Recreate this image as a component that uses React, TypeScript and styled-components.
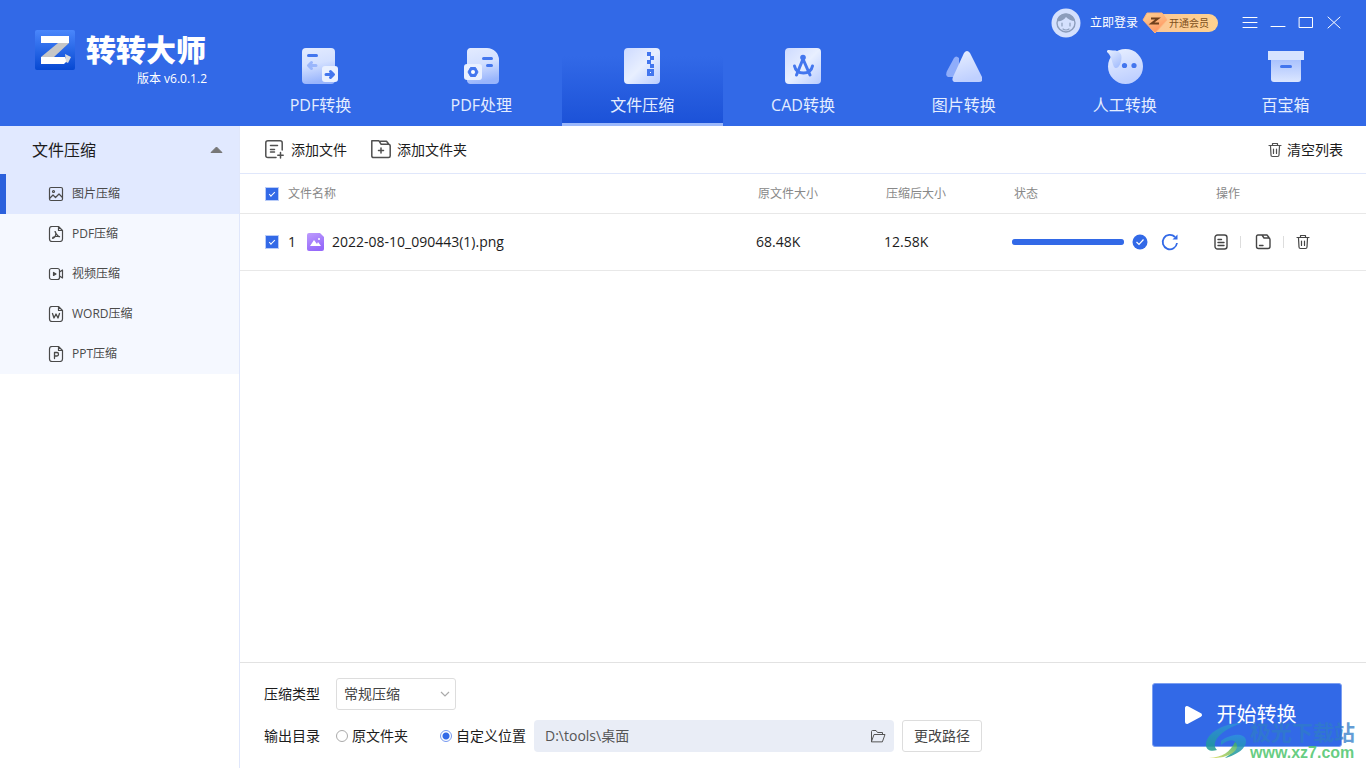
import React, { useState } from 'react';
import styled, { createGlobalStyle, css } from 'styled-components';

const blue = '#3269e7';
const sans = '"Open Sans", "Noto Sans CJK SC", "Noto Sans", sans-serif';

const GlobalStyle = createGlobalStyle`
  *, *::before, *::after { box-sizing: border-box; }
  body { margin: 0; background: #fff; color: #1c1c1c; font: 14px/20px ${sans}; }
  button, input, select { font: inherit; color: inherit; margin: 0; }
  button { padding: 0; border: 0; background: none; cursor: pointer; }
  svg { display: block; flex: none; }
`;

const Page = styled.div`
  display: flex;
  flex-direction: column;
  min-height: 100vh;
`;

const Header = styled.header`
  display: grid;
  grid-template-columns: 240px 1fr;
  background: ${blue};
  color: #fff;
`;

const Brand = styled.div`
  display: grid;
  grid-template-columns: 40px 121px;
  column-gap: 11px;
  align-content: start;
  padding: 30px 0 0 35px;
`;

const BrandName = styled.h1`
  margin: 0;
  font-size: 30px;
  line-height: 40px;
  font-weight: 900;
  white-space: nowrap;
`;

const Version = styled.span`
  grid-column: 2;
  font-size: 12px;
  line-height: 18px;
  text-align: right;
`;

const HeaderMain = styled.div`
  display: flex;
  flex-direction: column;
`;

const TitleBar = styled.div`
  display: flex;
  align-items: center;
  justify-content: flex-end;
  height: 46px;
  padding-right: 24px;
`;

const LoginButton = styled.button`
  display: flex;
  align-items: center;
  gap: 9px;
  font-size: 12px;
`;

const VipButton = styled.button`
  display: flex;
  align-items: center;
  height: 18px;
  margin-left: 4px;
  padding-right: 9px;
  border-radius: 0 9px 9px 0;
  background: linear-gradient(90deg, #fff0 12px, #fbc795 12px, #ffd28f);
  color: #80501c;
  font-size: 10px;
  line-height: 18px;
`;

const WindowControls = styled.div`
  display: flex;
  gap: 12px;
  margin-left: 24px;
`;

const WindowButton = styled.button`
  width: 16px;
  height: 16px;
`;

const Tabs = styled.nav`
  display: grid;
  grid-template-columns: repeat(7, 1fr);
  flex: 1;
`;

const Tab = styled.button<{ $active?: boolean }>`
  display: flex;
  flex-direction: column;
  align-items: center;
  gap: 8px;
  height: 80px;
  padding-top: 2px;
  border-bottom: 3px solid transparent;
  color: #e4edff;
  font-size: 16px;
  line-height: 26px;
  ${(p) => p.$active && css`
    border-color: #9bb8fb;
    background: linear-gradient(#3269e7 10px, #1c52d8);
    background-clip: padding-box;
  `}
`;

const Body = styled.div`
  display: flex;
  flex: 1;
`;

const Sidebar = styled.aside`
  flex: none;
  width: 240px;
  border-right: 1px solid #e0e7fb;
`;

const GroupButton = styled.button`
  display: flex;
  align-items: center;
  justify-content: space-between;
  width: 100%;
  height: 48px;
  padding: 0 16px 0 32px;
  background: #e1e9ff;
  font-size: 16px;
`;

const SideItem = styled.button<{ $active?: boolean }>`
  display: flex;
  align-items: center;
  gap: 8px;
  width: 100%;
  height: 40px;
  padding-left: 42px;
  border-left: 6px solid ${(p) => (p.$active ? '#2b60dc' : '#f5f8ff')};
  background: ${(p) => (p.$active ? '#e1e9ff' : '#f5f8ff')};
  color: #4a4a4a;
  font-size: 12px;
`;

const Main = styled.main`
  display: flex;
  flex-direction: column;
  flex: 1;
  min-width: 0;
`;

const Toolbar = styled.div`
  display: flex;
  align-items: center;
  gap: 24px;
  height: 48px;
  padding: 0 23px 0 25px;
  border-bottom: 1px solid #e0e7fb;
`;

const ToolButton = styled.button<{ $end?: boolean }>`
  display: flex;
  align-items: center;
  gap: ${(p) => (p.$end ? 5 : 6)}px;
  margin-left: ${(p) => (p.$end ? 'auto' : 0)};
  > svg { color: #505050; }
`;

const FileArea = styled.div`
  flex: 1;
`;

const FileTable = styled.table`
  width: 100%;
  table-layout: fixed;
  border-collapse: separate;
  border-spacing: 0;
  text-align: left;
`;

const Col = styled.col<{ $width?: number }>`
  width: ${(p) => (p.$width ? `${p.$width}px` : 'auto')};
`;

const HeadCell = styled.th`
  height: 40px;
  padding: 0 0 0 2px;
  border-bottom: 1px solid #e8e8e8;
  color: #888;
  font-size: 12px;
  font-weight: 400;
  &:nth-child(2) { padding-left: 0; }
  &:first-child { padding-left: 26px; }
`;

const Cell = styled.td`
  height: 57px;
  padding: 0;
  border-bottom: 1px solid #e8e8e8;
  &:first-child { padding-left: 26px; }
`;

const CellRow = styled.div<{ $gap: number }>`
  display: flex;
  align-items: center;
  gap: ${(p) => p.$gap}px;
`;

const Checkbox = styled.input.attrs({ type: 'checkbox' })`
  display: block;
  appearance: none;
  width: 12px;
  height: 12px;
  outline: 1px solid #b9ccf8;
  background: #fff;
  &:checked {
    background: ${blue};
  }
  &:checked::after {
    content: '';
    display: block;
    width: 6px;
    height: 3px;
    margin: 4px 0 0 3px;
    border: solid #fff;
    border-width: 0 0 1px 1px;
    transform: rotate(-45deg);
  }
`;

const Progress = styled.div`
  width: 112px;
  height: 6px;
  margin-right: 8px;
  border-radius: 3px;
  background: #a9c0f7;
`;

const ProgressFill = styled.div`
  height: 100%;
  border-radius: 3px;
  background: ${blue};
`;

const IconButton = styled.button`
  color: #454545;
`;

const Divider = styled.span`
  width: 1px;
  height: 12px;
  background: #ddd;
`;

const Footer = styled.footer`
  display: flex;
  align-items: flex-start;
  justify-content: space-between;
  padding: 15px 24px 16px;
  border-top: 1px solid #e2e2e2;
`;

const Settings = styled.form`
  display: grid;
  gap: 10px;
`;

const SettingRow = styled.div`
  display: flex;
  align-items: center;
  height: 32px;
`;

const SettingLabel = styled.label`
  width: 72px;
`;

const SelectWrap = styled.span`
  display: grid;
  align-items: center;
  width: 120px;
  > * { grid-area: 1 / 1; }
  > svg { justify-self: end; margin-right: 6px; pointer-events: none; }
`;

const Select = styled.select`
  appearance: none;
  width: 100%;
  height: 32px;
  padding: 0 7px;
  border: 1px solid #ddd;
  border-radius: 3px;
  background: #fff;
  color: #444;
`;

const RadioLabel = styled.label`
  display: flex;
  align-items: center;
  gap: 4px;
  & + & { margin-left: 32px; }
`;

const Radio = styled.input.attrs({ type: 'radio' })`
  appearance: none;
  width: 12px;
  height: 12px;
  border: 1px solid #aaa;
  border-radius: 50%;
  &:checked {
    border-color: #7699f0;
    background: radial-gradient(circle, ${blue} 3px, #fff 4px);
  }
`;

const PathBox = styled.div`
  display: flex;
  align-items: center;
  width: 360px;
  height: 32px;
  margin: 0 8px;
  padding: 0 8px 0 11px;
  border-radius: 4px;
  background: #e9edf6;
  color: #555;
`;

const PathInput = styled.input`
  flex: 1;
  min-width: 0;
  padding: 0;
  border: 0;
  outline: 0;
  background: transparent;
`;

const ChangeButton = styled.button`
  width: 80px;
  height: 32px;
  border: 1px solid #ddd;
  border-radius: 3px;
  color: #444;
`;

const StartButton = styled.button`
  display: flex;
  align-items: center;
  justify-content: center;
  gap: 14px;
  width: 190px;
  height: 64px;
  margin-top: 5px;
  padding-right: 14px;
  border: 1px solid #7c9ff1;
  border-radius: 3px;
  background: ${blue};
  color: #fff;
  font-size: 20px;
`;

const Watermark = styled.div`
  position: absolute;
  right: 11px;
  bottom: 6px;
  display: flex;
  align-items: flex-end;
  gap: 1px;
  pointer-events: none;
`;

const WatermarkText = styled.div`
  display: flex;
  flex-direction: column;
  color: rgba(48, 124, 200, 0.75);
  font: 700 21px/26px "Noto Sans CJK SC", sans-serif;
`;

const WatermarkUrl = styled.span`
  color: rgba(76, 196, 108, 0.85);
  font: 700 16px/18px "Liberation Sans", sans-serif;
`;

const Gradients = () => (
  <svg width="0" height="0" aria-hidden="true">
    <defs>
      <linearGradient id="down" x1="0" y1="0" x2="0.2" y2="1">
        <stop offset="0" stopColor="#e3ebff" />
        <stop offset="0.5" stopColor="#d3e0ff" />
        <stop offset="1" stopColor="#99b5fc" />
      </linearGradient>
      <linearGradient id="sheen" x1="0" y1="0" x2="1" y2="1">
        <stop offset="0" stopColor="#cddaff" />
        <stop offset="0.5" stopColor="#e8efff" />
        <stop offset="1" stopColor="#b9ccff" />
      </linearGradient>
      <linearGradient id="pale" x1="0" y1="0" x2="0.3" y2="1">
        <stop offset="0" stopColor="#e9f0ff" />
        <stop offset="1" stopColor="#bfd0ff" />
      </linearGradient>
      <linearGradient id="ear" x1="0" y1="0" x2="0.6" y2="1">
        <stop offset="0" stopColor="#e9f0ff" />
        <stop offset="1" stopColor="#a9c1fd" />
      </linearGradient>
      <linearGradient id="deep" x1="0" y1="0" x2="0" y2="1">
        <stop offset="0" stopColor="#a6bffd" />
        <stop offset="1" stopColor="#dbe6ff" />
      </linearGradient>
      <linearGradient id="logo" x1="0" y1="0" x2="0" y2="1">
        <stop offset="0" stopColor="#4a86fb" />
        <stop offset="1" stopColor="#0648d2" />
      </linearGradient>
      <linearGradient id="purple" x1="0" y1="0" x2="0.4" y2="1">
        <stop offset="0" stopColor="#bd9cfd" />
        <stop offset="1" stopColor="#9669fa" />
      </linearGradient>
      <linearGradient id="gem" x1="0" y1="0" x2="0.5" y2="1">
        <stop offset="0" stopColor="#ffd596" />
        <stop offset="1" stopColor="#ff9460" />
      </linearGradient>
      <linearGradient id="globe" x1="0" y1="0" x2="0" y2="1">
        <stop offset="0" stopColor="#2f8fe0" />
        <stop offset="1" stopColor="#1d9c8c" />
      </linearGradient>
      <linearGradient id="leaf" x1="0" y1="1" x2="1" y2="0">
        <stop offset="0" stopColor="#e0dc55" />
        <stop offset="1" stopColor="#35ad6a" />
      </linearGradient>
    </defs>
  </svg>
);

const Logo = () => (
  <svg width="40" height="40" viewBox="0 0 40 40" aria-hidden="true">
    <rect width="40" height="40" rx="2" fill="url(#logo)" />
    <path d="M6 27 23 13H34L19 27Z" fill="#c6c6c6" />
    <path d="M6 6H34V13H6Z" fill="#fff" />
    <path d="M6 27H30L32 31 29 34H6Z" fill="#fff" />
    <path d="M30 24 36 27 33 33 31 32Z" fill="#dcdcdc" />
  </svg>
);

const stroke = { fill: 'none', stroke: '#4376ee', strokeWidth: 3, strokeLinecap: 'round' as const, strokeLinejoin: 'round' as const };

const tabs = [
  { label: 'PDF转换', art: <>
    <rect width="33" height="36" x="0" rx="4" fill="url(#down)" />
    <path d="M6.500 7.500H14.500" {...stroke} />
    <path d="M14 17.500H7M9.500 14.500 6.500 17.500 9.500 20.500" {...stroke} stroke="#9ab6fb" />
    <rect x="20" y="18" width="16" height="16" rx="3" fill="#eaf1ff" />
    <path d="M24 26.500H31M28.500 23.500 31.500 26.500 28.500 29.500" {...stroke} />
  </> },
  { label: 'PDF处理', art: <>
    <path d="M7 0H24A12 12 0 0 1 36 12V32A4 4 0 0 1 32 36H7A4 4 0 0 1 4 32V4A4 4 0 0 1 7 0Z" fill="url(#down)" />
    <path d="M20.500 10.500H28.500M24.500 17.500H28.500" {...stroke} />
    <rect x="1" y="16" width="18" height="16" rx="3" fill="#e9f0ff" />
    <path d="M7.500 19.500H12.500L15 24 12.500 28.500H7.500L5 24Z" fill="#4376ee" stroke="#4376ee" strokeLinejoin="round" />
    <circle cx="10" cy="24" r="2" fill="#fff" />
  </> },
  { label: '文件压缩', art: <>
    <rect width="36" height="36" rx="4" fill="url(#sheen)" />
    <path d="M23 4H27V8H23ZM26 8H30V12H26ZM23 12H27V16H23ZM26 16H30V20H26Z" fill="#4376ee" />
    <path d="M24.500 22.500H28.500V26.500H24.500Z" fill="#fff" stroke="#4376ee" strokeWidth="3" />
  </> },
  { label: 'CAD转换', art: <>
    <rect width="36" height="36" rx="4" fill="url(#sheen)" />
    <g {...stroke}>
      <path d="M18 11 11.500 27M18 11 25 27" />
      <path d="M9.500 18Q11 25 18.500 25Q26 25 27.500 18" />
    </g>
    <circle cx="18" cy="9.500" r="2.800" fill="#4376ee" />
  </> },
  { label: '图片转换', art: <>
    <path d="M8 10Q10 7 13 10V29H2Q-1 28 1 23Z" fill="#8fadfa" />
    <path d="M18 5Q21 1 24 5L36 29Q38 34 33 34H10Q5 34 7 29Z" fill="url(#pale)" />
  </> },
  { label: '人工转换', art: <>
    <circle cx="18.500" cy="18.500" r="17.500" fill="url(#pale)" />
    <path d="M0 3C1 1 4 3 7 2.500C11 2.500 14.500 5 14.500 9C14.500 15 12 20 9 20C5 20 6 9 0 4Z" fill="url(#ear)" />
    <circle cx="17.500" cy="17.500" r="2.600" fill="#4376ee" />
    <circle cx="27" cy="17.500" r="2.600" fill="#4376ee" />
  </> },
  { label: '百宝箱', art: <>
    <path d="M3 10H33V31Q33 34 30 34H6Q3 34 3 31Z" fill="url(#deep)" />
    <path d="M0 3H36V12H0Z" fill="#d7e3ff" />
    <path d="M13.500 18.500H22.500" {...stroke} />
  </> },
];

const Doc = ({ children }: { children: React.ReactNode }) => (
  <>
    <path d="M3 0.500H9.500L13.500 4.500V13Q13.500 15.500 11 15.500H3Q0.500 15.500 0.500 13V3Q0.500 0.500 3 0.500ZM9.500 0.500V4.500H13.500" />
    {children}
  </>
);

const sideItems = [
  { label: '图片压缩', art: <>
    <rect x="0.500" y="1.500" width="13" height="13" rx="1.500" />
    <circle cx="4.500" cy="5.500" r="1" />
    <path d="M1 12 4 9 6.500 11.500 10 8 13 11" />
  </> },
  { label: 'PDF压缩', art: <Doc><path d="M6 5.500C7 5.500 7 8 6.500 9.500C5.500 12 3.500 13 3.500 12C3.500 10.500 8 10 10.500 10.500C11 11.500 7 9 6 5.500Z" /></Doc> },
  { label: '视频压缩', art: <>
    <rect x="0.500" y="2.500" width="10" height="11" rx="2" />
    <path d="M4.500 6.500V9.500L7 8Z" fill="currentColor" />
    <path d="M10.500 6 13.500 4V12L10.500 10" />
  </> },
  { label: 'WORD压缩', art: <Doc><path d="M3.500 7.500 5 12 7 8 9 12 10.500 7.500" strokeWidth="1.300" /></Doc> },
  { label: 'PPT压缩', art: <Doc><path d="M5.500 12.500V6.500H8Q9.500 6.500 9.500 8.200Q9.500 10 8 10H5.500" strokeWidth="1.300" /></Doc> },
];

const Line = ({ w, h, sw = 1.2, children }: { w: number; h: number; sw?: number; children: React.ReactNode }) => (
  <svg width={w} height={h} viewBox={`0 0 ${w} ${h}`} fill="none" stroke="currentColor" strokeWidth={sw} strokeLinecap="round" strokeLinejoin="round" aria-hidden="true">
    {children}
  </svg>
);

const Trash = () => (
  <Line w={14} h={16}>
    <path d="M1 3.500H13M4.500 3V1.500H9.500V3M2.500 4 3 13Q3 14.500 4.500 14.500H9.500Q11 14.500 11 13L11.500 4M5.500 7V11.500M8.500 7V11.500" />
  </Line>
);

const Avatar = () => (
  <svg width="30" height="30" viewBox="0 0 30 30" aria-hidden="true">
    <circle cx="15" cy="15" r="14.500" fill="#d4e0fd" />
    <circle cx="15" cy="15" r="9" fill="none" stroke="#8c9dbb" strokeWidth="1.400" />
    <path d="M6 13C7 4 21 3 24 13C20 13 17 11 15 9C13 12 9 14 6 13Z" fill="#8c9dbb" />
    <path d="M11 15V18M19 15V18M12 21Q15 23 18 21" fill="none" stroke="#8c9dbb" strokeWidth="1.200" strokeLinecap="round" />
  </svg>
);

const windowButtons = [
  { name: '菜单', d: 'M1 2.500H15M1 7.500H15M1 12.500H15' },
  { name: '最小化', d: 'M1 11.500H15' },
  { name: '最大化', d: 'M1.500 2.500H14.500V12.500H1.500Z' },
  { name: '关闭', d: 'M2 2 14 13M14 2 2 13' },
];

export default function App() {
  const [all, setAll] = useState(true);
  const [target, setTarget] = useState('custom');
  return (
    <Page>
      <GlobalStyle />
      <Header>
        <Brand>
          <Logo />
          <BrandName>转转大师</BrandName>
          <Version>版本 v6.0.1.2</Version>
        </Brand>
        <HeaderMain>
          <TitleBar>
            <LoginButton><Avatar />立即登录</LoginButton>
            <VipButton>
              <svg width="27" height="22" viewBox="0 0 27 22" aria-hidden="true">
                <path d="M5 1H20L25 8 13 21 1 8Z" fill="url(#gem)" stroke="#ffb27a" strokeLinejoin="round" />
                <path d="M9 6.500H16L9.500 11.500H17" fill="none" stroke="#70401c" strokeWidth="2" />
              </svg>
              开通会员
            </VipButton>
            <WindowControls>
              {windowButtons.map((b) => (
                <WindowButton key={b.name} aria-label={b.name}>
                  <Line w={16} h={16} sw={1}><path d={b.d} /></Line>
                </WindowButton>
              ))}
            </WindowControls>
          </TitleBar>
          <Tabs>
            {tabs.map((t, i) => (
              <Tab key={t.label} $active={i === 2}>
                <svg width="36" height="36" viewBox="0 0 36 36" aria-hidden="true">{t.art}</svg>
                {t.label}
              </Tab>
            ))}
          </Tabs>
        </HeaderMain>
      </Header>
      <Body>
        <Sidebar>
          <GroupButton>
            文件压缩
            <svg width="13" height="8" viewBox="0 0 13 8" aria-hidden="true">
              <path d="M6.500 1 12 6.500H1Z" fill="#777" stroke="#777" strokeLinejoin="round" />
            </svg>
          </GroupButton>
          {sideItems.map((s, i) => (
            <SideItem key={s.label} $active={i === 0}>
              <Line w={16} h={16}><g transform="translate(1 0)">{s.art}</g></Line>
              {s.label}
            </SideItem>
          ))}
        </Sidebar>
        <Main>
          <Toolbar>
            <ToolButton>
              <Line w={20} h={20} sw={1.5}>
                <path d="M11 17.500H3Q0.800 17.500 0.800 15.500V2.800Q0.800 0.800 3 0.800H15Q17.200 0.800 17.200 2.800V10M5.500 5.500H12.500M5.500 9.500H9.500M5.500 12H9.500M15.500 12.500V18M12.800 15.200H18.200" />
              </Line>
              添加文件
            </ToolButton>
            <ToolButton>
              <Line w={20} h={20} sw={1.5}>
                <path d="M0.800 16V0.800H8L10 4.200H17.500Q19.200 4.200 19.200 6V16Q19.200 17.500 17.500 17.500H2.500Q0.800 17.500 0.800 16ZM9.500 1.200H15.500L17.500 3.700M10 8V13M7.500 10.500H12.500" />
              </Line>
              添加文件夹
            </ToolButton>
            <ToolButton $end><Trash />清空列表</ToolButton>
          </Toolbar>
          <FileArea>
            <FileTable>
              <colgroup>
                <Col $width={48} /><Col /><Col $width={128} /><Col $width={128} /><Col $width={202} /><Col $width={152} />
              </colgroup>
              <thead>
                <tr>
                  <HeadCell><Checkbox aria-label="全选" checked={all} onChange={() => setAll(!all)} /></HeadCell>
                  <HeadCell>文件名称</HeadCell>
                  <HeadCell>原文件大小</HeadCell>
                  <HeadCell>压缩后大小</HeadCell>
                  <HeadCell>状态</HeadCell>
                  <HeadCell>操作</HeadCell>
                </tr>
              </thead>
              <tbody>
                <tr>
                  <Cell><Checkbox aria-label="选择文件 1" checked={all} onChange={() => setAll(!all)} /></Cell>
                  <Cell>
                    <CellRow $gap={8}>
                      <span>1</span>
                      <svg width="20" height="20" viewBox="-1 0 20 20" aria-hidden="true">
                        <path d="M4 1H15L19 5V17Q19 19 17 19H4Q2 19 2 17V3Q2 1 4 1Z" fill="url(#purple)" />
                        <path d="M5 14 9 8 12 12 13 10 16 14Z" fill="#fff" />
                        <circle cx="14" cy="7" r="1" fill="#fff" />
                      </svg>
                      <span>2022-08-10_090443(1).png</span>
                    </CellRow>
                  </Cell>
                  <Cell>68.48K</Cell>
                  <Cell>12.58K</Cell>
                  <Cell>
                    <CellRow $gap={0}>
                      <Progress role="progressbar" aria-label="压缩进度" aria-valuenow={100}><ProgressFill style={{ width: '100%' }} /></Progress>
                      <svg width="16" height="16" viewBox="0 0 16 16" aria-hidden="true">
                        <circle cx="8" cy="8" r="7.500" fill={blue} />
                        <path d="m4.500 8 2.500 2.500 4.500-5" fill="none" stroke="#fff" strokeWidth="1.200" />
                      </svg>
                      <IconButton aria-label="重试">
                        <svg width="44" height="18" viewBox="-13 0 44 18" fill="none" stroke={blue} strokeWidth="1.800" aria-hidden="true">
                          <path d="M16 10A7.200 7.200 0 1 1 14 4" />
                          <path d="M16.500 1.500V6.500H11.500Z" fill={blue} stroke="none" />
                        </svg>
                      </IconButton>
                    </CellRow>
                  </Cell>
                  <Cell>
                    <CellRow $gap={12}>
                      <IconButton aria-label="查看文件">
                        <Line w={14} h={16} sw={1.4}>
                          <rect x="1" y="1" width="12" height="14" rx="2.500" />
                          <path d="M4 5.500H7.500M4 8.500H10M4 11.500H10" />
                        </Line>
                      </IconButton>
                      <Divider />
                      <IconButton aria-label="打开文件夹">
                        <Line w={18} h={16} sw={1.4}>
                          <path d="M5 1H9L11 4H15.500Q17 4 17 5.500V12.500Q17 14.500 15 14.500H5.500Q3.500 14.500 3.500 12.500V2.500Q3.500 1 5 1ZM9 1H14L16 3.500M6.500 11.500H10" />
                        </Line>
                      </IconButton>
                      <Divider />
                      <IconButton aria-label="删除"><Trash /></IconButton>
                    </CellRow>
                  </Cell>
                </tr>
              </tbody>
            </FileTable>
          </FileArea>
          <Footer>
            <Settings onSubmit={(e) => e.preventDefault()}>
              <SettingRow>
                <SettingLabel htmlFor="mode">压缩类型</SettingLabel>
                <SelectWrap>
                  <Select id="mode"><option>常规压缩</option></Select>
                  <svg width="10" height="8" viewBox="0 0 10 8" fill="none" stroke="#aaa" strokeWidth="1.200" aria-hidden="true">
                    <path d="m1 2 4 4 4-4" />
                  </svg>
                </SelectWrap>
              </SettingRow>
              <SettingRow>
                <SettingLabel htmlFor="path">输出目录</SettingLabel>
                <RadioLabel>
                  <Radio name="target" checked={target === 'source'} onChange={() => setTarget('source')} />原文件夹
                </RadioLabel>
                <RadioLabel>
                  <Radio name="target" checked={target === 'custom'} onChange={() => setTarget('custom')} />自定义位置
                </RadioLabel>
                <PathBox>
                  <PathInput id="path" defaultValue={'D:\\tools\\桌面'} />
                  <Line w={16} h={14} sw={1}>
                    <path d="M1.500 12.500V2.500Q1.500 1.500 2.500 1.500H6L7.500 3.500H12.500V5.500M1.500 12.500 4 5.500H15L12.500 12.500Z" />
                  </Line>
                </PathBox>
                <ChangeButton type="button">更改路径</ChangeButton>
              </SettingRow>
            </Settings>
            <StartButton>
              <svg width="19" height="20" viewBox="0 0 19 20" aria-hidden="true">
                <path d="M3 3V17L16 10Z" fill="#fff" stroke="#fff" strokeWidth="4" strokeLinejoin="round" />
              </svg>
              开始转换
            </StartButton>
          </Footer>
        </Main>
      </Body>
      <Watermark>
        <svg width="44" height="40" viewBox="0 0 44 40" opacity="0.85" aria-hidden="true">
          <path d="M37 1C20 1 1 10 1 23C1 28 6 30 12 28C5 21 15 8 37 1Z" fill="url(#globe)" />
          <path d="M16 19C25 12 39 10 41 18C42 26 32 33 20 36C29 30 35 22 29 19C25 17 20 20 16 23Z" fill="url(#globe)" />
          <path d="M4 36C18 35 25 30 30 20C36 24 30 37 4 36Z" fill="url(#leaf)" />
        </svg>
        <WatermarkText>
          极光下载站
          <WatermarkUrl>www.xz7.com</WatermarkUrl>
        </WatermarkText>
      </Watermark>
      <Gradients />
    </Page>
  );
}
